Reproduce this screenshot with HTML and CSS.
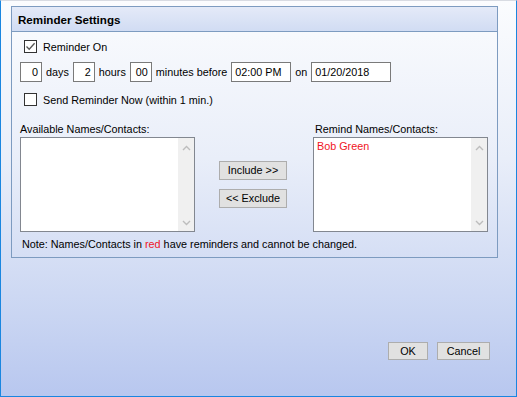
FILE: index.html
```html
<!DOCTYPE html>
<html>
<head>
<meta charset="utf-8">
<link rel="stylesheet" href="styles.css">
</head>
<body>
<div class="window">
  <section class="panel">
    <div class="panel-head">Reminder Settings</div>
    <div class="panel-body">
      <div class="check-row first">
        <span class="cb"><svg width="11" height="11" viewBox="0 0 11 11"><path d="M1.5 5.5 L4.2 8.3 L9.6 2.2" fill="none" stroke="#555" stroke-width="1.3"/></svg></span>
        <span>Reminder On</span>
      </div>
      <div class="time-row">
        <span class="field num w22">0</span><span>days</span>
        <span class="field num w22">2</span><span>hours</span>
        <span class="field num w22">00</span><span>minutes before</span>
        <span class="field w60">02:00 PM</span><span>on</span>
        <span class="field w80">01/20/2018</span>
      </div>
      <div class="check-row second">
        <span class="cb"></span>
        <span>Send Reminder Now (within 1 min.)</span>
      </div>
      <div class="lists">
        <div class="list-col">
          <div class="list-label">Available Names/Contacts:</div>
          <div class="listbox">
            <div class="items"></div>
            <div class="scroll">
              <svg width="9" height="6" viewBox="0 0 9 6"><path d="M1 5 L4.5 1.5 L8 5" fill="none" stroke="#bdbdbd" stroke-width="1.4"/></svg>
              <svg width="9" height="6" viewBox="0 0 9 6"><path d="M1 1 L4.5 4.5 L8 1" fill="none" stroke="#bdbdbd" stroke-width="1.4"/></svg>
            </div>
          </div>
        </div>
        <div class="mid-buttons">
          <button class="btn mid">Include &gt;&gt;</button>
          <button class="btn mid">&lt;&lt; Exclude</button>
        </div>
        <div class="list-col">
          <div class="list-label">Remind Names/Contacts:</div>
          <div class="listbox">
            <div class="items"><div class="locked">Bob Green</div></div>
            <div class="scroll">
              <svg width="9" height="6" viewBox="0 0 9 6"><path d="M1 5 L4.5 1.5 L8 5" fill="none" stroke="#bdbdbd" stroke-width="1.4"/></svg>
              <svg width="9" height="6" viewBox="0 0 9 6"><path d="M1 1 L4.5 4.5 L8 1" fill="none" stroke="#bdbdbd" stroke-width="1.4"/></svg>
            </div>
          </div>
        </div>
      </div>
      <p class="note">Note: Names/Contacts in <span class="red">red</span> have reminders and cannot be changed.</p>
    </div>
  </section>
  <div class="footer">
    <button class="btn ok">OK</button>
    <button class="btn cancel">Cancel</button>
  </div>
</div>
</body>
</html>
```
FILE: styles.css
```css
html, body {
  margin: 0;
  padding: 0;
  height: 100%;
}
body {
  font-family: "Liberation Sans", Arial, sans-serif;
  font-size: 10.8px;
  color: #000;
}
.window {
  box-sizing: border-box;
  height: 397px;
  width: 517px;
  border: 1px solid #1a86e0;
  border-top-color: #d8dbe2;
  background: linear-gradient(to bottom, #fbfcfe 0%, #e9eef9 40%, #c9d5f2 80%, #b8c7ef 100%);
  display: flex;
  flex-direction: column;
}
.panel {
  margin: 5px 18px 0 10px;
  border: 1px solid #7d9bc0;
  height: 252px;
  box-sizing: border-box;
  display: flex;
  flex-direction: column;
}
.panel-head {
  height: 25px;
  box-sizing: border-box;
  border-bottom: 1px solid #7d9bc0;
  background: linear-gradient(to bottom, #e4eaf8, #d1dcf3);
  font-weight: bold;
  font-size: 11.6px;
  line-height: 25px;
  padding-left: 6px;
}
.panel-body {
  padding: 0 8px;
  display: flex;
  flex-direction: column;
}
.check-row {
  display: flex;
  align-items: center;
  gap: 6px;
  margin-left: 4px;
  height: 13px;
}
.check-row.first { margin-top: 8px; }
.check-row.second { margin-top: 11px; }
.cb {
  width: 13px;
  height: 13px;
  box-sizing: border-box;
  border: 1px solid #333;
  background: #fff;
  display: flex;
  align-items: center;
  justify-content: center;
}
.time-row {
  display: flex;
  align-items: center;
  gap: 4px;
  margin-top: 9px;
  height: 20px;
}
.field {
  box-sizing: border-box;
  height: 20px;
  border: 1px solid #7a7a7a;
  background: #fff;
  line-height: 18px;
  padding: 0 3px;
}
.field.num { text-align: right; }
.w22 { width: 22px; }
.w60 { width: 60px; }
.w80 { width: 80px; }
.lists {
  display: flex;
  align-items: flex-start;
  margin-top: 17px;
}
.list-col {
  width: 175px;
  display: flex;
  flex-direction: column;
}
.list-col:last-child { margin-left: 26px; }
.list-col:last-child .list-label { padding-left: 2px; }
.list-label {
  height: 13px;
  line-height: 13px;
  margin-bottom: 1px;
}
.listbox {
  height: 95px;
  box-sizing: border-box;
  border: 1px solid #828790;
  background: #fff;
  display: flex;
}
.items {
  flex: 1;
  padding: 2px 3px;
}
.locked {
  color: #f0141e;
  line-height: 13px;
}
.scroll {
  width: 16px;
  background: #f0f0f0;
  display: flex;
  flex-direction: column;
  justify-content: space-between;
  align-items: center;
  padding: 7px 0 5px;
}
.mid-buttons {
  display: flex;
  flex-direction: column;
  gap: 9px;
  margin-left: 24px;
  margin-top: 38px;
}
.btn {
  font-family: "Liberation Sans", Arial, sans-serif;
  font-size: 10.8px;
  color: #000;
  background: #e1e1e1;
  border: 1px solid #adadad;
  box-sizing: border-box;
  padding: 0;
  height: 19px;
  line-height: 17px;
}
.btn.mid { width: 68px; }
.note {
  margin: 6px 0 0 2px;
  line-height: 13px;
}
.red { color: #f0141e; }
.footer {
  display: flex;
  justify-content: flex-end;
  gap: 9px;
  padding-right: 26px;
  margin-top: 84px;
}
.btn.ok { width: 40px; height: 18px; }
.btn.cancel { width: 53px; height: 18px; }
```
